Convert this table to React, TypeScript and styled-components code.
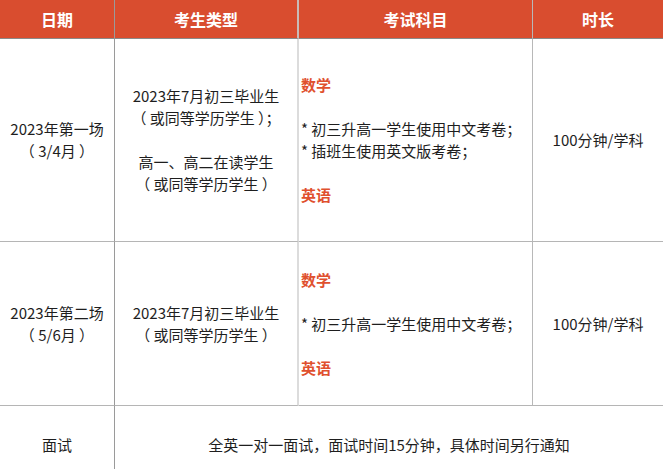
import styled, { createGlobalStyle } from "styled-components";

const GlobalStyle = createGlobalStyle`
  html, body {
    margin: 0;
    padding: 0;
    background: #fff;
  }
  body {
    font-family: "Noto Sans CJK SC", "Noto Sans", sans-serif;
    color: #1e1e1e;
  }
`;

const Table = styled.div`
  display: grid;
  grid-template-columns: 115px 184px 234px 130px;
  width: 663px;
  font-size: 15px;
  line-height: 22px;
`;

const HeadCell = styled.div<{ $divider?: string }>`
  height: 38px;
  background: #d94d2f;
  color: #fff;
  font-weight: bold;
  font-size: 16px;
  display: flex;
  align-items: center;
  justify-content: center;
  border-bottom: 1px solid #8a8a8a;
  border-right: ${(p) => p.$divider || "none"};
`;

const Cell = styled.div<{ $h: number; $divider?: string; $left?: boolean; $span?: number }>`
  height: ${(p) => p.$h}px;
  box-sizing: border-box;
  border-bottom: 1px solid #b5b5b5;
  border-right: ${(p) => p.$divider || "none"};
  grid-column: ${(p) => (p.$span ? `span ${p.$span}` : "auto")};
  display: flex;
  flex-direction: column;
  justify-content: center;
  align-items: ${(p) => (p.$left ? "flex-start" : "center")};
  text-align: ${(p) => (p.$left ? "left" : "center")};
  padding-left: ${(p) => (p.$left ? "2px" : "0")};
`;

const Line = styled.div`
  white-space: nowrap;
`;

const Blank = styled.div`
  height: 22px;
`;

const Subject = styled.div`
  color: #e0502e;
  font-weight: bold;
`;

const D1 = "1px solid #9a9a9a";
const D2 = "2px solid #dcdcdc";
const D3 = "1px solid #b8b8b8";

export default function App() {
  return (
    <>
      <GlobalStyle />
      <Table>
        <HeadCell $divider={D1}>日期</HeadCell>
        <HeadCell $divider="2px solid #c9bcb8">考生类型</HeadCell>
        <HeadCell $divider={D3}>考试科目</HeadCell>
        <HeadCell>时长</HeadCell>

        <Cell $h={203} $divider={D1}>
          <Line>2023年第一场</Line>
          <Line>（ 3/4月 ）</Line>
        </Cell>
        <Cell $h={203} $divider={D2}>
          <Line>2023年7月初三毕业生</Line>
          <Line>（ 或同等学历学生 ）；</Line>
          <Blank />
          <Line>高一、高二在读学生</Line>
          <Line>（ 或同等学历学生 ）</Line>
        </Cell>
        <Cell $h={203} $divider={D3} $left>
          <Subject>数学</Subject>
          <Blank />
          <Line>* 初三升高一学生使用中文考卷；</Line>
          <Line>* 插班生使用英文版考卷；</Line>
          <Blank />
          <Subject>英语</Subject>
        </Cell>
        <Cell $h={203}>
          <Line>100分钟/学科</Line>
        </Cell>

        <Cell $h={164} $divider={D1}>
          <Line>2023年第二场</Line>
          <Line>（ 5/6月 ）</Line>
        </Cell>
        <Cell $h={164} $divider={D2}>
          <Line>2023年7月初三毕业生</Line>
          <Line>（ 或同等学历学生 ）</Line>
        </Cell>
        <Cell $h={164} $divider={D3} $left>
          <Subject>数学</Subject>
          <Blank />
          <Line>* 初三升高一学生使用中文考卷；</Line>
          <Blank />
          <Subject>英语</Subject>
        </Cell>
        <Cell $h={164}>
          <Line>100分钟/学科</Line>
        </Cell>

        <Cell $h={78} $divider={D1}>
          <Line>面试</Line>
        </Cell>
        <Cell $h={78} $span={3}>
          <Line>全英一对一面试，面试时间15分钟，具体时间另行通知</Line>
        </Cell>
      </Table>
    </>
  );
}
